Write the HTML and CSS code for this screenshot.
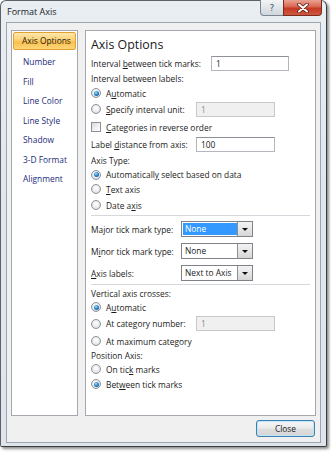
FILE: index.html
```html
<!DOCTYPE html>
<html>
<head>
<meta charset="utf-8">
<link rel="stylesheet" href="styles.css">
</head>
<body>
<div class="window">
  <div class="titlebar">
    <span class="title">Format Axis</span>
    <div class="caption-btns">
      <div class="cbtn help">?</div>
      <div class="cbtn close">
        <svg width="14" height="10" viewBox="0 0 14 10"><path d="M3 1.5 L11 8.5 M11 1.5 L3 8.5" stroke="#5a1a12" stroke-width="3.6" stroke-linecap="round"/><path d="M3 1.5 L11 8.5 M11 1.5 L3 8.5" stroke="#fff" stroke-width="2" stroke-linecap="round"/></svg>
      </div>
    </div>
  </div>
  <div class="client">
    <div class="panels">
      <ul class="nav">
        <li class="nav-item active">Axis Options</li>
        <li class="nav-item">Number</li>
        <li class="nav-item">Fill</li>
        <li class="nav-item">Line Color</li>
        <li class="nav-item">Line Style</li>
        <li class="nav-item">Shadow</li>
        <li class="nav-item">3-D Format</li>
        <li class="nav-item">Alignment</li>
      </ul>
      <div class="content">
        <div class="heading">Axis Options</div>
        <div class="row h16"><span class="lbl w120">Interval <u>b</u>etween tick marks:</span><span class="field w78">1</span></div>
        <div class="row h15"><span class="lbl">Interval between labels:</span></div>
        <div class="row h14"><span class="radio on"></span><span class="lbl">A<u>u</u>tomatic</span></div>
        <div class="row h18"><span class="radio"></span><span class="lbl w90"><u>S</u>pecify interval unit:</span><span class="field disabled w79">1</span></div>
        <div class="row h18"><span class="check"></span><span class="lbl"><u>C</u>ategories in reverse order</span></div>
        <div class="row h16"><span class="lbl w105">Label <u>d</u>istance from axis:</span><span class="field w79">100</span></div>
        <div class="row h16"><span class="lbl">Axis Type:</span></div>
        <div class="row h13"><span class="radio on"></span><span class="lbl">Automaticall<u>y</u> select based on data</span></div>
        <div class="row h16"><span class="radio"></span><span class="lbl"><u>T</u>ext axis</span></div>
        <div class="row h16"><span class="radio"></span><span class="lbl">Date a<u>x</u>is</span></div>
        <div class="sep sep1"></div>
        <div class="row h18 mb4"><span class="lbl w90">Ma<u>j</u>or tick mark type:</span><span class="combo focus"><span class="combo-text">None</span><span class="combo-btn"></span></span></div>
        <div class="row h18 mb4"><span class="lbl w90">M<u>i</u>nor tick mark type:</span><span class="combo"><span class="combo-text">None</span><span class="combo-btn"></span></span></div>
        <div class="row h18"><span class="lbl w90"><u>A</u>xis labels:</span><span class="combo"><span class="combo-text">Next to Axis</span><span class="combo-btn"></span></span></div>
        <div class="sep sep2"></div>
        <div class="row h14"><span class="lbl">Vertical axis crosses:</span></div>
        <div class="row h14"><span class="radio on"></span><span class="lbl">A<u>u</u>tomatic</span></div>
        <div class="row h19"><span class="radio"></span><span class="lbl w90">At cate<u>g</u>ory number:</span><span class="field disabled w79">1</span></div>
        <div class="row h16"><span class="radio"></span><span class="lbl">At maximum category</span></div>
        <div class="row h13"><span class="lbl">Position Axis:</span></div>
        <div class="row h14"><span class="radio"></span><span class="lbl">On tic<u>k</u> marks</span></div>
        <div class="row h16"><span class="radio on"></span><span class="lbl">Bet<u>w</u>een tick marks</span></div>
      </div>
    </div>
    <div class="footer">
      <button class="btn">Close</button>
    </div>
  </div>
</div>
</body>
</html>
```
FILE: styles.css
```css
* { box-sizing: border-box; }
html, body { margin: 0; padding: 0; background: #ffffff; }
body {
  font-family: "Open Sans", "Noto Sans", sans-serif;
  font-size: 8.4px;
  color: #1b1b1b;
  width: 331px;
  height: 453px;
  overflow: hidden;
}
.window {
  width: 327px;
  height: 447px;
  border: 1px solid #5d6268;
  border-right-color: #3a3d40;
  border-bottom-color: #3a3d40;
  border-radius: 6px 6px 2px 2px;
  background: linear-gradient(180deg, #e9eef3 0%, #e1e7ed 40%, #dfe5eb 100%);
  box-shadow: 2px 2px 3px rgba(0,0,0,0.45);
  display: flex;
  flex-direction: column;
}
.titlebar {
  height: 21px;
  display: flex;
  align-items: flex-start;
  padding-left: 6px;
}
.title {
  font-size: 9px;
  color: #1a1a1a;
  line-height: 20px;
  margin-top: 1px;
}
.caption-btns {
  margin-left: auto;
  display: flex;
  margin-right: 4px;
  margin-top: -1px;
}
.cbtn {
  height: 16px;
  display: flex;
  align-items: center;
  justify-content: center;
  border: 1px solid #7b8590;
  border-top: none;
}
.help {
  width: 23px;
  border-radius: 0 0 0 4px;
  background: linear-gradient(180deg, #f3f5f7 0%, #e0e5ea 50%, #cfd6dd 100%);
  color: #4d5560;
  font-size: 9px;
  font-family: "DejaVu Sans", sans-serif;
  border-right: none;
}
.close {
  width: 39px;
  border-radius: 0 0 4px 0;
  border-color: #7a2b20;
  background: linear-gradient(180deg, #e9a393 0%, #d9664f 45%, #c43a24 55%, #d0583e 100%);
}
.client {
  flex: 1;
  margin: 0 5px 3px 5px;
  border: 1px solid #9aa6b3;
  background: #f0f0f0;
  padding: 7px 4px 0 4px;
  display: flex;
  flex-direction: column;
}
.panels {
  display: flex;
  gap: 7px;
  height: 386px;
}
.nav {
  list-style: none;
  margin: 0;
  width: 67px;
  padding: 1px;
  border: 1px solid #a7a7b0;
  background: #fff;
}
.nav-item {
  height: 19.5px;
  line-height: 19.5px;
  padding-left: 10px;
  color: #1d2b7a;
  white-space: nowrap;
}
.nav-item.active {
  height: 18px;
  line-height: 16px;
  margin-bottom: 2px;
  padding-left: 8px;
  color: #1a1a1a;
  border: 1px solid #e3a230;
  border-radius: 2px;
  background: linear-gradient(180deg, #fee7b0 0%, #fdd170 45%, #fcc04a 55%, #fdd57d 100%);
}
.content {
  flex: 1;
  border: 1px solid #a7a7b0;
  background: #fff;
  padding: 0 5px;
  display: flex;
  flex-direction: column;
}
.heading {
  height: 24px;
  padding-top: 5px;
  font-size: 12.4px;
  line-height: 18px;
  color: #1a1a1a;
}
.row {
  display: flex;
  align-items: center;
  white-space: nowrap;
}
.h13 { height: 13px; }
.h14 { height: 14px; }
.h15 { height: 15px; }
.h16 { height: 16px; }
.h18 { height: 18px; }
.h19 { height: 19px; }
.mb4 { margin-bottom: 4px; }
.lbl { flex: none; }
.w90 { width: 90px; }
.w105 { width: 105px; }
.w120 { width: 120px; }
.w78 { width: 78px; }
.w79 { width: 79px; }
u { text-decoration: underline; text-underline-offset: 1px; }
.field {
  height: 15px;
  border: 1px solid #b3b6bd;
  border-top-color: #8d9299;
  background: #fff;
  padding-left: 4px;
  line-height: 13px;
  color: #1a1a1a;
}
.field.disabled {
  background: #f0f0f0;
  border-color: #c6c8cc;
  color: #8d8d8d;
}
.radio {
  flex: none;
  width: 10px;
  height: 10px;
  border-radius: 50%;
  border: 1px solid #8e9298;
  background: radial-gradient(circle at 50% 40%, #ffffff 0%, #f0f0f0 40%, #d2d4d8 100%);
  margin-right: 5px;
  position: relative;
}
.radio.on::after {
  content: "";
  position: absolute;
  left: 1.5px;
  top: 1.5px;
  width: 5px;
  height: 5px;
  border-radius: 50%;
  background: radial-gradient(circle at 40% 35%, #9fe0ff 0%, #2a8ad0 45%, #0b3f7a 100%);
}
.check {
  flex: none;
  width: 10px;
  height: 10px;
  border: 1px solid #8e9298;
  background: linear-gradient(135deg, #d6d8dc 0%, #f4f4f5 60%, #ffffff 100%);
  margin-right: 5px;
}
.sep {
  border-top: 1px solid #d5d9de;
}
.sep1 { margin-top: 2px; margin-bottom: 4px; }
.sep2 { margin-top: 2px; margin-bottom: 1px; }
.combo {
  display: flex;
  width: 72px;
  height: 16px;
  border: 1px solid #7f8389;
  background: #fff;
}
.combo-text {
  flex: 1;
  padding-left: 3px;
  line-height: 14px;
  overflow: hidden;
}
.combo.focus .combo-text {
  background: #3399ff;
  color: #fff;
  margin: 1px 0 1px 1px;
  line-height: 12px;
  padding-left: 2px;
}
.combo-btn {
  width: 15px;
  border-left: 1px solid #8c9096;
  background: linear-gradient(180deg, #f3f3f3 0%, #e6e6e6 50%, #d6d6d6 100%);
  position: relative;
}
.combo-btn::after {
  content: "";
  position: absolute;
  left: 4px;
  top: 6px;
  border-left: 3px solid transparent;
  border-right: 3px solid transparent;
  border-top: 3px solid #111;
}
.footer {
  display: flex;
  justify-content: flex-end;
  padding-top: 4px;
  padding-right: 1px;
}
.btn {
  width: 59px;
  height: 17px;
  padding: 0;
  font-family: inherit;
  font-size: 8.4px;
  color: #1a1a1a;
  border: 1px solid #3c7fb1;
  border-radius: 3px;
  background: linear-gradient(180deg, #f6f6f6 0%, #ececec 45%, #dedede 55%, #d4d4d4 100%);
  box-shadow: inset 0 0 0 1px #bfe6f8;
}
```
